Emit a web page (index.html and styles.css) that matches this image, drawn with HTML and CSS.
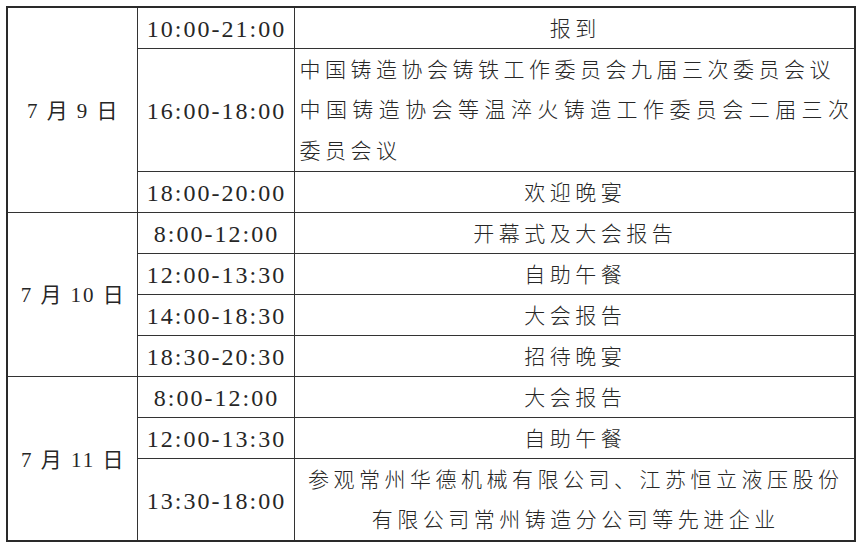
FILE: index.html
```html
<!DOCTYPE html>
<html lang="zh-CN">
<head>
<meta charset="utf-8">
<title>会议日程</title>
<link rel="stylesheet" href="styles.css">
</head>
<body>
<table class="schedule">
  <colgroup>
    <col class="col-date">
    <col class="col-time">
    <col class="col-event">
  </colgroup>
  <tbody>
    <tr>
      <td class="date" rowspan="3">7 月 9 日</td>
      <td class="time">10:00-21:00</td>
      <td class="event">报到</td>
    </tr>
    <tr>
      <td class="time">16:00-18:00</td>
      <td class="event multi">
        <div class="line">中国铸造协会铸铁工作委员会九届三次委员会议</div>
        <div class="line justify">中国铸造协会等温淬火铸造工作委员会二届三次</div>
        <div class="line">委员会议</div>
      </td>
    </tr>
    <tr>
      <td class="time">18:00-20:00</td>
      <td class="event">欢迎晚宴</td>
    </tr>
    <tr>
      <td class="date" rowspan="4">7 月 10 日</td>
      <td class="time">8:00-12:00</td>
      <td class="event">开幕式及大会报告</td>
    </tr>
    <tr>
      <td class="time">12:00-13:30</td>
      <td class="event">自助午餐</td>
    </tr>
    <tr>
      <td class="time">14:00-18:30</td>
      <td class="event">大会报告</td>
    </tr>
    <tr>
      <td class="time">18:30-20:30</td>
      <td class="event">招待晚宴</td>
    </tr>
    <tr>
      <td class="date" rowspan="3">7 月 11 日</td>
      <td class="time">8:00-12:00</td>
      <td class="event">大会报告</td>
    </tr>
    <tr>
      <td class="time">12:00-13:30</td>
      <td class="event">自助午餐</td>
    </tr>
    <tr>
      <td class="time">13:30-18:00</td>
      <td class="event multi centered">
        <div class="line">参观常州华德机械有限公司、江苏恒立液压股份</div>
        <div class="line">有限公司常州铸造分公司等先进企业</div>
      </td>
    </tr>
  </tbody>
</table>
</body>
</html>
```

FILE: styles.css
```css
html, body {
  margin: 0;
  padding: 0;
  background: #ffffff;
}

body {
  padding: 6px 0 0 6px;
  font-family: "Liberation Serif", "Noto Sans CJK SC", serif;
  color: #262626;
}

.schedule {
  border-collapse: collapse;
  table-layout: fixed;
  width: 848px;
  border: 2px solid #2a2a2a;
}

.col-date { width: 130px; }
.col-time { width: 157px; }
.col-event { width: 561px; }

.schedule td {
  border: 1px solid #333333;
  padding: 0;
  vertical-align: middle;
  line-height: 37px;
}

.schedule td.date {
  text-align: center;
  font-size: 21px;
  letter-spacing: 2px;
  padding: 3px 0 0 2px;
}

.schedule td.time {
  text-align: center;
  font-size: 24px;
  letter-spacing: 2px;
  padding: 3px 0 0 2px;
}

.schedule td.event {
  text-align: center;
  font-size: 21px;
  font-weight: 300;
  letter-spacing: 4.5px;
  padding: 3px 6px 0 8px;
}

.schedule td.event.multi {
  text-align: left;
  padding: 1px 5px 0 5px;
}

.event.multi .line {
  line-height: 40.3px;
  white-space: nowrap;
}

.event.multi .line.justify {
  text-align: justify;
  text-align-last: justify;
  letter-spacing: 0;
}

.schedule td.event.centered {
  text-align: center;
  padding-left: 8px;
}
```
